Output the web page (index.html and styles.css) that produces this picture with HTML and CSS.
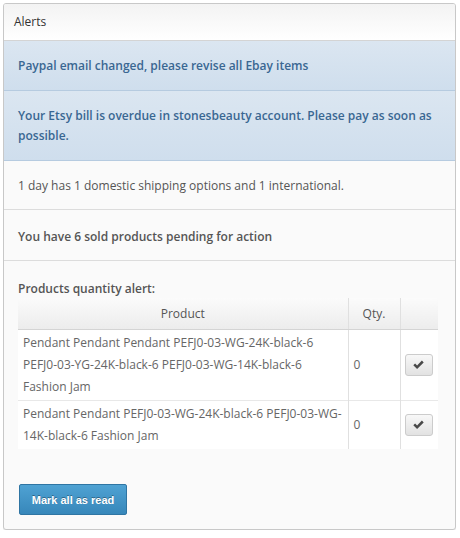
FILE: index.html
```html
<!DOCTYPE html>
<html>
<head>
<meta charset="utf-8">
<link rel="stylesheet" href="styles.css">
</head>
<body>
<div class="panel">
  <div class="panel-heading">Alerts</div>
  <div class="item info one">Paypal email changed, please revise all Ebay items</div>
  <div class="item info two">Your Etsy bill is overdue in stonesbeauty account. Please pay as soon as possible.</div>
  <div class="item plain">1 day has 1 domestic shipping options and 1 international.</div>
  <div class="item plain strong">You have 6 sold products pending for action</div>
  <div class="section">
    <div class="section-title">Products quantity alert:</div>
    <table class="qtable">
      <colgroup><col class="w-prod"><col class="w-qty"><col class="w-act"></colgroup>
      <thead>
        <tr><th>Product</th><th>Qty.</th><th></th></tr>
      </thead>
      <tbody>
        <tr>
          <td>Pendant Pendant Pendant PEFJ0-03-WG-24K-black-6 PEFJ0-03-YG-24K-black-6 PEFJ0-03-WG-14K-black-6 Fashion Jam</td>
          <td>0</td>
          <td class="c-act"><button class="okbtn"><svg width="13" height="10" viewBox="0 0 12 10"><path d="M0.8 5.2 L2.6 3.4 L4.6 5.4 L9.4 0.6 L11.2 2.4 L4.6 9 Z" fill="#4a4a4a"/></svg></button></td>
        </tr>
        <tr>
          <td>Pendant Pendant PEFJ0-03-WG-24K-black-6 PEFJ0-03-WG-14K-black-6 Fashion Jam</td>
          <td>0</td>
          <td class="c-act"><button class="okbtn"><svg width="13" height="10" viewBox="0 0 12 10"><path d="M0.8 5.2 L2.6 3.4 L4.6 5.4 L9.4 0.6 L11.2 2.4 L4.6 9 Z" fill="#4a4a4a"/></svg></button></td>
        </tr>
      </tbody>
    </table>
    <button class="markbtn">Mark all as read</button>
  </div>
</div>
</body>
</html>
```
FILE: styles.css
```css
html, body { background: #ffffff; }
body {
  margin: 3px;
  width: 453px;
  font-family: "Open Sans", "Liberation Sans", sans-serif;
  font-size: 12px;
  color: #555;
}
.panel {
  border: 1px solid #c8c8c8;
  border-radius: 3px;
  background: #fafafa;
  box-shadow: 0 1px 1px rgba(0,0,0,0.08);
  overflow: hidden;
}
.panel-heading {
  height: 36px;
  line-height: 36px;
  padding: 0 10px;
  font-size: 12px;
  color: #333;
  background: linear-gradient(#f3f3f3, #ffffff);
  border-bottom: 1px solid #d4d4d4;
}
.item {
  padding: 15px 14px 13px;
  line-height: 20px;
  border-bottom: 1px solid #dcdcdc;
}
.item.info {
  background: linear-gradient(#dbe6f1, #cfdeed);
  color: #3a6792;
  font-weight: 600;
  border-bottom: 1px solid #b6cbe0;
}
.item.one { padding: 15px 14px 14px; }
.item.two { padding: 15px 14px 14px; }
.item.plain { background: #fafafa; color: #555; }
.item.strong { font-weight: 600; padding-top: 17px; padding-bottom: 13px; }
.section {
  padding: 19px 16px 14px 14px;
}
.section-title {
  font-weight: 600;
  color: #555;
  line-height: 17px;
}
.qtable {
  width: 420px;
  table-layout: fixed;
  border-collapse: collapse;
  background: #fff;
  margin-top: 1px;
}
.w-prod { width: 330px; }
.w-qty { width: 52px; }
.w-act { width: 38px; }
.qtable th {
  height: 31px;
  font-weight: 400;
  color: #555;
  background: linear-gradient(#fbfbfb, #ececec);
  border-bottom: 1px solid #d4d4d4;
  text-align: center;
  padding: 0;
}
.qtable th + th, .qtable td + td { border-left: 1px solid #e0e0e0; }
.qtable td {
  padding: 2px 5px;
  line-height: 22px;
  vertical-align: middle;
  color: #666;
}
.qtable tbody tr + tr td { border-top: 1px solid #e8e8e8; }
.qtable td.c-act { padding: 0 4px; }
.okbtn {
  width: 28px;
  height: 22px;
  padding: 0;
  border: 1px solid #cccccc;
  border-radius: 3px;
  background: linear-gradient(#f8f8f8, #e2e2e2);
  display: flex;
  align-items: center;
  justify-content: center;
}
.markbtn {
  margin: 35px 0 0 1px;
  width: 108px;
  height: 31px;
  padding: 0;
  border: 1px solid #2f75a3;
  border-radius: 2px;
  background: linear-gradient(#4fa2d3, #3787ba);
  color: #fff;
  font-family: "Liberation Sans", Arial, sans-serif;
  font-weight: bold;
  font-size: 11px;
  text-shadow: 0 -1px 0 rgba(0,0,0,0.35);
  display: block;
}
```
